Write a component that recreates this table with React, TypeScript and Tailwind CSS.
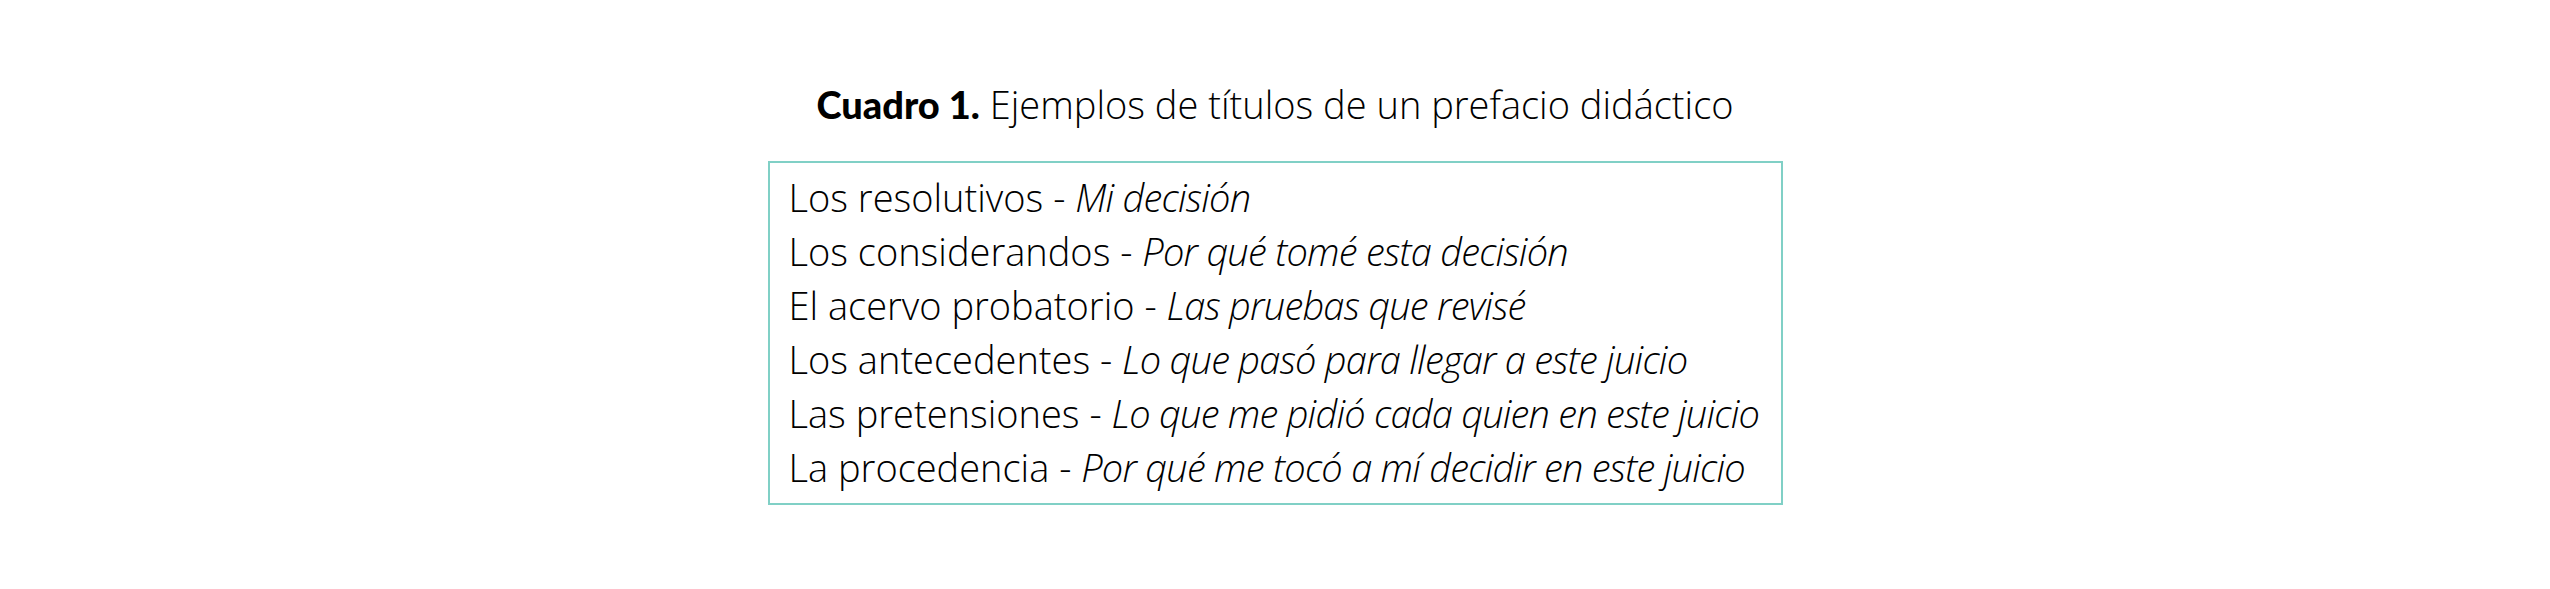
const rows: [string, string][] = [
  ['Los resolutivos', 'Mi decisión'],
  ['Los considerandos', 'Por qué tomé esta decisión'],
  ['El acervo probatorio', 'Las pruebas que revisé'],
  ['Los antecedentes', 'Lo que pasó para llegar a este juicio'],
  ['Las pretensiones', 'Lo que me pidió cada quien en este juicio'],
  ['La procedencia', 'Por qué me tocó a mí decidir en este juicio'],
]

export default function App() {
  return (
    <div className="flex h-[589px] w-[2550px] flex-col items-center bg-white pt-[77px] font-['Open_Sans',sans-serif] text-black">
      <h1 className="text-[38px] leading-[54px] font-light whitespace-nowrap">
        <span className="font-['Lato',sans-serif] font-black">Cuadro 1.</span> Ejemplos de títulos de un prefacio didáctico
      </h1>
      <div className="mt-[30px] w-[1015px] border-2 border-[#80d0c6] pt-[7px] pb-[9px] pl-[19px]">
        {rows.map(([term, gloss]) => (
          <p key={term} className="text-[38px] leading-[54px] font-light whitespace-nowrap">
            {term} - <em className="italic tracking-[-0.02em]">{gloss}</em>
          </p>
        ))}
      </div>
    </div>
  )
}
